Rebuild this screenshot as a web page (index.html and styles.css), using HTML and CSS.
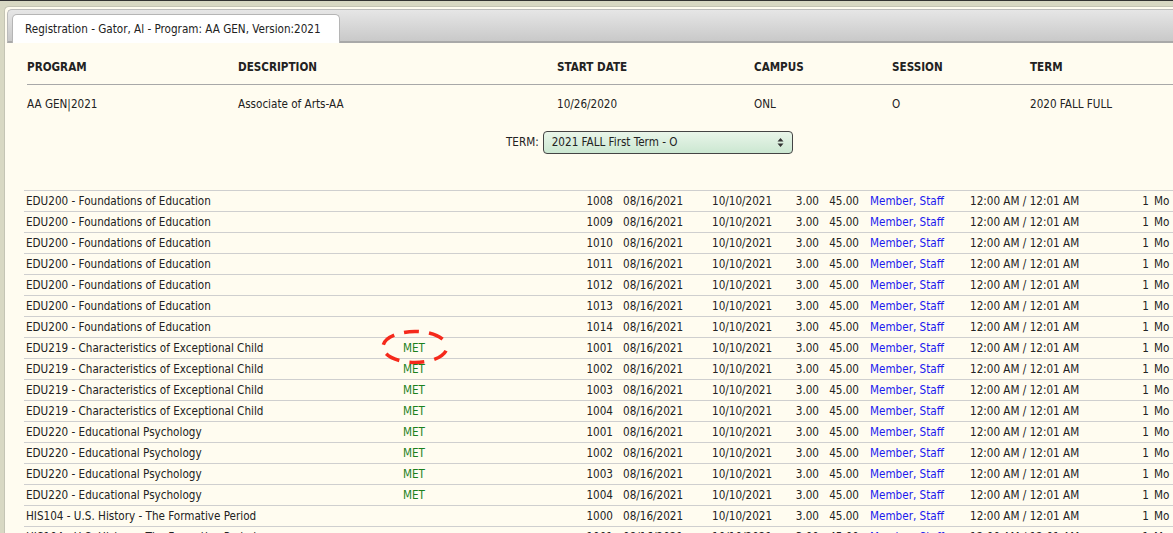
FILE: index.html
```html
<!DOCTYPE html>
<html>
<head>
<meta charset="utf-8">
<link rel="stylesheet" href="styles.css">
</head>
<body>
<div class="frame">
  <div class="panel">
    <div class="tabbar">
      <div class="tab">Registration - Gator, Al - Program: AA GEN, Version:2021</div>
    </div>
    <div class="content">
      <table class="prog">
        <colgroup><col class="c1"><col class="c2"><col class="c3"><col class="c4"><col class="c5"><col class="c6"></colgroup>
        <thead>
          <tr><th>PROGRAM</th><th>DESCRIPTION</th><th>START DATE</th><th>CAMPUS</th><th>SESSION</th><th>TERM</th></tr>
        </thead>
        <tbody>
          <tr><td>AA GEN|2021</td><td>Associate of Arts-AA</td><td>10/26/2020</td><td>ONL</td><td>O</td><td>2020 FALL FULL</td></tr>
        </tbody>
      </table>
      <div class="termrow">
        <label class="termlabel">TERM:</label>
        <div class="select">
          <span>2021 FALL First Term - O</span>
          <svg class="arrows" width="7" height="11" viewBox="0 0 7 11"><path d="M3.5 1 L6.5 4.5 H0.5 Z M3.5 10 L6.5 6.5 H0.5 Z" fill="#333"/></svg>
        </div>
      </div>
      <div class="scroller">
        <table class="courses">
          <colgroup>
            <col class="k1"><col class="k2"><col class="k3"><col class="k4"><col class="k5"><col class="k6"><col class="k7"><col class="k8"><col class="k9"><col class="k10"><col class="k11">
          </colgroup>
          <tbody id="rows"></tbody>
        </table>
      </div>
    </div>
  </div>
</div>
<script src="app.js"></script>
</body>
</html>
```

FILE: app.js
```js
const data = [
  ["EDU200 - Foundations of Education", "", "1008"],
  ["EDU200 - Foundations of Education", "", "1009"],
  ["EDU200 - Foundations of Education", "", "1010"],
  ["EDU200 - Foundations of Education", "", "1011"],
  ["EDU200 - Foundations of Education", "", "1012"],
  ["EDU200 - Foundations of Education", "", "1013"],
  ["EDU200 - Foundations of Education", "", "1014"],
  ["EDU219 - Characteristics of Exceptional Child", "MET", "1001", true],
  ["EDU219 - Characteristics of Exceptional Child", "MET", "1002"],
  ["EDU219 - Characteristics of Exceptional Child", "MET", "1003"],
  ["EDU219 - Characteristics of Exceptional Child", "MET", "1004"],
  ["EDU220 - Educational Psychology", "MET", "1001"],
  ["EDU220 - Educational Psychology", "MET", "1002"],
  ["EDU220 - Educational Psychology", "MET", "1003"],
  ["EDU220 - Educational Psychology", "MET", "1004"],
  ["HIS104 - U.S. History - The Formative Period", "", "1000"],
  ["HIS104 - U.S. History - The Formative Period", "", "1001"]
];
const tb = document.getElementById("rows");
tb.innerHTML = data.map(r => `<tr>
<td class="name">${r[0]}</td>
<td class="met">${r[1] ? `<span class="metw">${r[1]}${r[3] ? '<svg class="circle" width="72" height="38" viewBox="0 0 72 38"><ellipse cx="36" cy="19" rx="32" ry="15.5" fill="none" stroke="#f5291b" stroke-width="3.5" stroke-dasharray="15 10" stroke-dashoffset="-4"/></svg>' : ''}</span>` : ''}</td>
<td class="num">${r[2]}</td>
<td class="d1">08/16/2021</td>
<td class="d2">10/10/2021</td>
<td class="num">3.00</td>
<td class="num">45.00</td>
<td class="inst"><a>Member, Staff</a></td>
<td class="time">12:00 AM / 12:01 AM</td>
<td class="num cnt">1</td>
<td class="days">Mo</td>
</tr>`).join("");
```

FILE: styles.css
```css
html, body {
  margin: 0;
  padding: 0;
  overflow: hidden;
  width: 1173px;
  height: 533px;
}
body {
  background: #d8d8c3;
  font-family: "DejaVu Sans Condensed", "DejaVu Sans", sans-serif;
  font-stretch: condensed;
  font-size: 11.6px;
  color: #222;
  border-top: 1px solid #333;
  box-sizing: border-box;
}
.frame {
  padding: 5px 0 0 4px;
}
.panel {
  background: #fffcf0;
  border: 1px solid #c4c4b4;
  border-right: none;
  border-radius: 5px 0 0 0;
  padding: 2px 0 0 2px;
  height: 540px;
}
.tabbar {
  height: 31px;
  background: linear-gradient(#e6e6e6, #c9c9c9);
  border-bottom: 2px solid #a9a9a9;
  border-radius: 5px 0 0 0;
  border-left: 1px solid #bbb;
  border-top: 1px solid #bbb;
  display: flex;
  align-items: flex-end;
  padding-left: 4px;
}
.tab {
  box-sizing: border-box;
  background: #fff;
  border: 1px solid #b5b5b5;
  border-bottom: none;
  border-radius: 5px 5px 0 0;
  padding: 0 12px;
  display: flex;
  align-items: center;
  margin-bottom: -2px;
  height: 29px;
  width: 328px;
  white-space: nowrap;
}
.content {
  position: relative;
}
.prog {
  border-collapse: collapse;
  margin-left: 20px;
  table-layout: fixed;
  width: 1200px;
}
.c1 { width: 211px; }
.c2 { width: 319px; }
.c3 { width: 197px; }
.c4 { width: 138px; }
.c5 { width: 138px; }
.prog th {
  text-align: left;
  font-weight: bold;
  height: 41px;
  padding: 8px 0 0 0;
  border-bottom: 1px solid #a8a8a8;
  vertical-align: middle;
  box-sizing: border-box;
}
.prog td {
  height: 38px;
  padding: 0;
  vertical-align: middle;
}
.termrow {
  display: flex;
  align-items: center;
  padding-left: 499px;
  margin-top: 8px;
  gap: 4px;
}
.termlabel {
  white-space: nowrap;
}
.select {
  width: 250px;
  height: 23px;
  box-sizing: border-box;
  border: 1px solid #444;
  border-radius: 4px;
  background: linear-gradient(#e9f5e9, #cbe7d1);
  display: flex;
  align-items: center;
  justify-content: space-between;
  padding: 0 8px 0 8px;
}
.scroller {
  margin-top: 36px;
  margin-left: 17px;
  height: 360px;
  overflow: hidden;
}
.courses {
  border-collapse: collapse;
  table-layout: fixed;
  width: 1250px;
  border-top: 1px solid #cfcfcf;
}
.k1 { width: 377px; }
.k2 { width: 160px; }
.k3 { width: 56px; }
.k4 { width: 89px; }
.k5 { width: 75px; }
.k6 { width: 42px; }
.k7 { width: 40px; }
.k8 { width: 100px; }
.k9 { width: 158px; }
.k10 { width: 30px; }
.k11 { width: 123px; }
.courses td {
  height: 21px;
  box-sizing: border-box;
  padding: 0;
  border-bottom: 1px solid #cfcfcf;
  white-space: nowrap;
  overflow: hidden;
  vertical-align: middle;
}
.courses td.name { padding-left: 2px; }
.courses td.met { padding-left: 2px; color: #1c801c; overflow: visible; }
.metw { position: relative; }
.circle {
  position: absolute;
  left: -24px;
  top: -13px;
}
.courses td.num { text-align: right; padding-right: 4px; }
.courses td.d1 { padding-left: 6px; }
.courses td.d2 { padding-left: 6px; }
.courses td.inst { padding-left: 7px; }
.courses td.inst a { color: #1a1aee; }
.courses td.time { padding-left: 7px; }
.courses td.cnt { padding-right: 2px; }
.courses td.days { padding-left: 3px; }
```
